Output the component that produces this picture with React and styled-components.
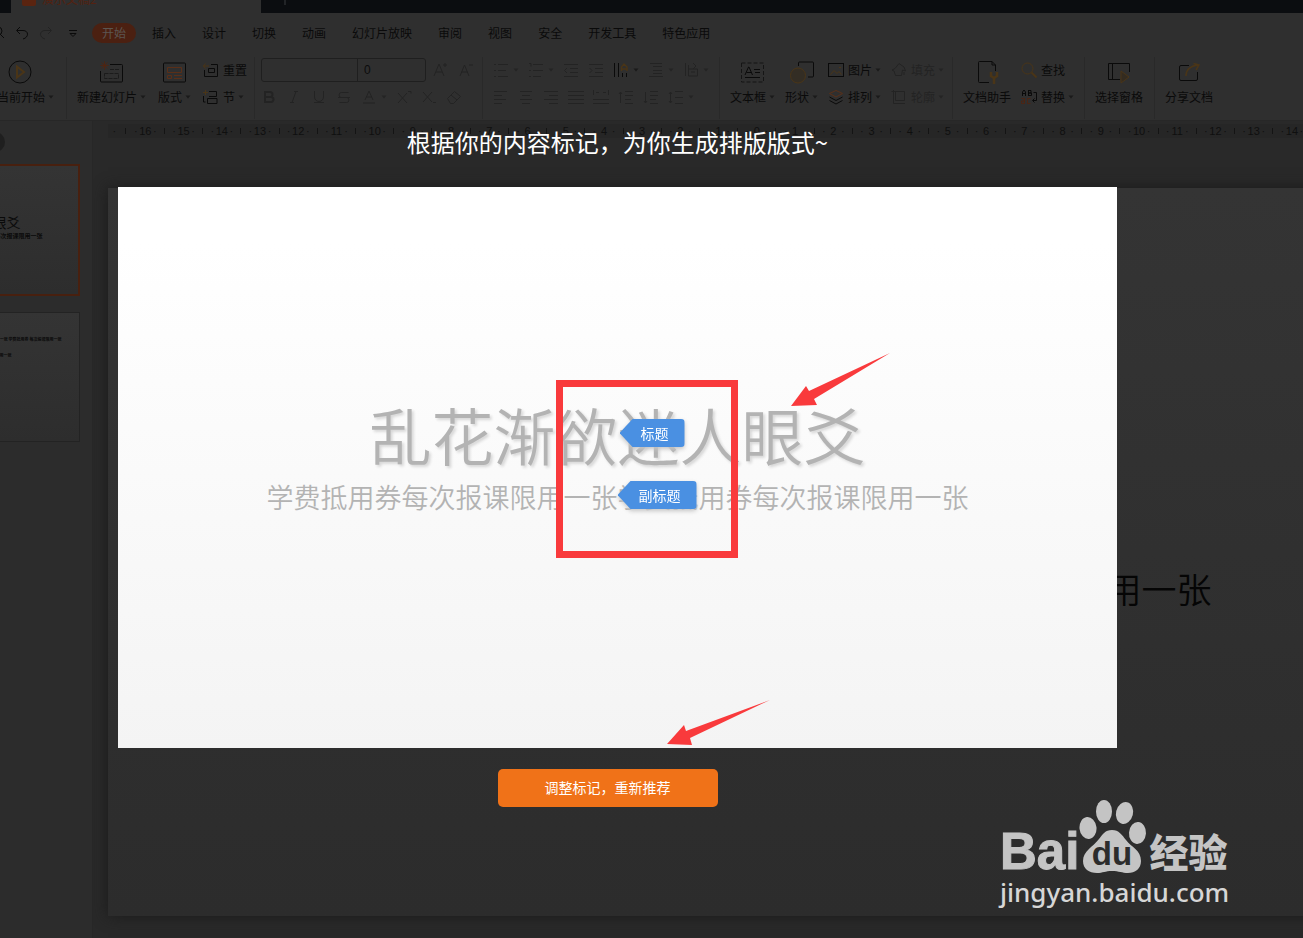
import React from "react";
import styled, { createGlobalStyle, css } from "styled-components";

const ink = "#0a0a0a";
const faint = "#232323";
const gold = "#4a3517";
const rust = "#4d2513";

const GlobalStyle = createGlobalStyle`
  *, *::before, *::after { box-sizing: border-box; }
  body {
    margin: 0;
    background: #292929;
    font-family: "Noto Sans CJK SC", "Liberation Sans", sans-serif;
  }
  button, input { font: inherit; color: inherit; }
`;

const Shell = styled.div`
  position: relative;
  display: flex;
  flex-direction: column;
  min-height: 100vh;
  overflow: hidden;
  color: ${ink};
  font-size: 12px;
  line-height: 20px;
`;

/* ---------- window tabs ---------- */
const TabStrip = styled.div`
  display: flex;
  align-items: flex-end;
  height: 13px;
  padding-left: 11px;
  overflow: hidden;
  background: #0b0d10;
`;

const DocTab = styled.div`
  display: flex;
  align-items: center;
  flex: 0 0 250px;
  gap: 6px;
  height: 28px;
  padding: 0 12px 0 11px;
  background: #2f2f2f;
  color: #532211;
`;

const DocBadge = styled.span`
  width: 14px;
  height: 14px;
  border-radius: 2px;
  background: #5a2410;
`;

const DocName = styled.span`
  flex: 1;
`;

const PlainButton = styled.button`
  display: inline-flex;
  align-items: center;
  padding: 0;
  border: 0;
  background: none;
  color: inherit;
  line-height: 20px;
  white-space: nowrap;
  cursor: pointer;
`;

const NewTab = styled(PlainButton)`
  height: 28px;
  padding-left: 18px;
  color: #3a3c3e;
`;

/* ---------- menu ---------- */
const MenuBar = styled.div`
  display: flex;
  align-items: center;
  height: 39px;
  background: #2f2f2f;
`;

const QuickActions = styled.div`
  display: flex;
  align-items: center;
  flex: 0 0 89px;
  gap: 8px;
  margin-left: -10px;
`;

const Menu = styled.nav`
  display: flex;
  align-items: center;
  margin-left: 10px;
`;

const MenuItem = styled(PlainButton)`
  height: 20px;
  padding: 0 13px;
  ${(p) =>
    p.$active &&
    css`
      margin: 0 3px;
      padding: 0 10px;
      border-radius: 10px;
      background: #4b2011;
      color: #5c5651;
    `}
`;

/* ---------- ribbon ---------- */
const Ribbon = styled.div`
  display: flex;
  height: 69px;
  padding-top: 5px;
  border-bottom: 1px solid #272727;
  background: #2f2f2f;
`;

const Group = styled.div`
  display: flex;
  flex: 0 0 ${(p) => p.$width}px;
  gap: ${(p) => p.$gap || 10}px;
  height: 62px;
  padding-left: ${(p) => p.$pad || 10}px;
  border-right: ${(p) => (p.$last ? "0" : "1px solid #292929")};
`;

const BigTool = styled(PlainButton)`
  flex-direction: column;
  flex: none;
  height: 52px;
  margin-left: ${(p) => (p.$cut ? "-16px" : "0")};
`;

const BigIcon = styled.span`
  display: flex;
  align-items: center;
  height: 30px;
`;

const Label = styled.span`
  display: inline-flex;
  align-items: center;
  gap: 3px;
`;

const Stack = styled.div`
  display: flex;
  flex-direction: column;
  flex: none;
  gap: 1px;
`;

const Line = styled.div`
  display: flex;
  align-items: center;
  gap: ${(p) => (p.$tight ? "0" : "9px")};
  height: 26px;
`;

const SmallTool = styled(PlainButton)`
  gap: 4px;
  height: 26px;
  color: ${(p) => (p.$off ? faint : ink)};
`;

const Field = styled.input`
  width: ${(p) => p.$width}px;
  height: 24px;
  padding: 0 6px;
  border: 1px solid #1f1f1f;
  border-radius: ${(p) => (p.$end ? "0 3px 3px 0" : "3px 0 0 3px")};
  margin-left: ${(p) => (p.$end ? "-1px" : "0")};
  background: none;
  color: #0c0c0c;
  font-family: "Liberation Sans", sans-serif;
  outline: 0;
`;

const SizeTools = styled.div`
  display: flex;
  gap: 9px;
  margin-left: 6px;
`;

/* ---------- workspace ---------- */
const Workspace = styled.div`
  display: flex;
  flex: 1;
`;

const Thumbs = styled.aside`
  display: flex;
  flex-direction: column;
  align-items: flex-end;
  flex: 0 0 93px;
  gap: 16px;
  padding: 9px 12px 0 0;
  overflow: hidden;
  border-right: 1px solid #272727;
  background: #2c2c2c;
`;

const PanelToggle = styled.button`
  align-self: flex-start;
  width: 20px;
  height: 20px;
  margin: 2px 0 -4px -15px;
  padding: 0;
  border: 0;
  border-radius: 50%;
  background: #1f1f1f;
`;

const Thumb = styled.div`
  display: flex;
  flex-direction: column;
  align-items: center;
  flex: none;
  width: 231px;
  height: ${(p) => (p.$current ? 132 : 130)}px;
  padding-top: ${(p) => (p.$current ? 47 : 22)}px;
  border: ${(p) => (p.$current ? "2px solid #48200f" : "1px solid #232323")};
  background: linear-gradient(#343434, #2d2d2d);
  white-space: nowrap;
`;

const ThumbTitle = styled.span`
  font-size: 14px;
  line-height: 18px;
`;

const ThumbText = styled.span`
  font-size: 6px;
  line-height: 10px;
  font-weight: 700;
`;

const ThumbNote = styled.span`
  width: 194px;
  margin-bottom: 8px;
  font-size: 4px;
  line-height: 8px;
  font-weight: 700;
  text-align: ${(p) => (p.$short ? "left" : "right")};
  padding-left: ${(p) => (p.$short ? "132px" : "0")};
`;

const Main = styled.main`
  flex: 1;
  min-width: 0;
  padding-left: 15px;
  overflow: hidden;
  background: #292929;
`;

const Ruler = styled.div`
  display: flex;
  height: 14px;
  margin: 3px -13px 50px 0;
  background: #262626;
  color: #0f0f0f;
  font-family: "Liberation Sans", sans-serif;
  font-size: 11px;
  line-height: 14px;
`;

const RulerLead = styled.div`
  display: flex;
  flex: 0 0 23px;
  justify-content: space-around;
`;

const RulerUnit = styled.div`
  display: grid;
  grid-template-columns: repeat(4, minmax(0, 1fr));
  flex: 1 1 0;
  min-width: 0;
  justify-items: center;
`;

const RulerTick = styled.span`
  width: 1px;
  height: 6px;
  margin-top: 4px;
  background: #141414;
`;

const RulerNumber = styled.span`
  display: flex;
  justify-content: center;
  width: 0;
`;

const EditorSlide = styled.section`
  display: flex;
  flex-direction: column;
  align-items: center;
  width: 1297px;
  min-width: 108%;
  height: 728px;
  padding-top: 266px;
  background: linear-gradient(#343434, #2c2c2c);
  box-shadow: 0 0 14px #1b1b1b;
  color: #050505;
  white-space: nowrap;
`;

const EditorTitle = styled.div`
  font-size: 80px;
  line-height: 116px;
  font-weight: 350;
`;

const EditorSubtitle = styled.div`
  font-size: 35px;
  line-height: 36px;
  font-weight: 350;
`;

/* ---------- recommendation overlay ---------- */
const Overlay = styled.div`
  position: absolute;
  inset: 0;
  display: flex;
  flex-direction: column;
  align-items: center;
  padding: 125px 186px 0 118px;
`;

const Headline = styled.h1`
  margin: 0 0 28px;
  color: #fff;
  font-size: 24px;
  line-height: 34px;
  font-weight: 400;
`;

const Preview = styled.section`
  position: relative;
  display: flex;
  flex-direction: column;
  align-items: center;
  width: 100%;
  min-height: 561px;
  padding-top: 204px;
  background: linear-gradient(#ffffff 10%, #f4f4f4);
  color: #b3b3b3;
  white-space: nowrap;
`;

const PreviewTitle = styled.h2`
  margin: 0;
  font-size: 62px;
  line-height: 86px;
  font-weight: 350;
  text-shadow: 2px 2px 3px #d6d6d6;
`;

const PreviewSubtitle = styled.p`
  margin: 0;
  font-size: 27px;
  line-height: 40px;
  font-weight: 350;
`;

const Mark = styled.button`
  position: absolute;
  left: calc(50% + 2px);
  top: ${(p) => p.$top}px;
  height: 28px;
  padding: 0 16px 0 21px;
  border: 0;
  background: none;
  color: #fff;
  font-size: 14px;
  line-height: 28px;
  filter: drop-shadow(0 2px 2px #c4c4c4);
  margin-left: ${(p) => (p.$wide ? "-2px" : "0")};

  &::before {
    content: "";
    position: absolute;
    inset: 0;
    z-index: -1;
    border-radius: 4px;
    background: #4a90e2;
    clip-path: polygon(0 50%, 13px 0, 100% 0, 100% 100%, 13px 100%);
  }
`;

const Highlight = styled.div`
  position: absolute;
  left: calc(50% - 62px);
  top: 193px;
  width: 182px;
  height: 178px;
  border: 7px solid #f93a3c;
`;

const Pointer = styled.svg`
  position: absolute;
  left: calc(50% + ${(p) => p.$x}px);
  top: ${(p) => p.$y}px;
`;

const Confirm = styled.button`
  width: 220px;
  height: 38px;
  margin: 21px 20px 0 0;
  padding: 0 0 2px;
  border: 0;
  border-radius: 5px;
  background: #f07218;
  color: #fff;
  font-size: 14px;
  cursor: pointer;
`;

/* ---------- watermark ---------- */
const Watermark = styled.div`
  position: absolute;
  right: 70px;
  bottom: 28px;
  width: 233px;
  color: #c4c4c4;
`;

const Brand = styled.div`
  display: flex;
  align-items: flex-end;
  height: 75px;
`;

const BrandLatin = styled.span`
  font-family: "Liberation Sans", sans-serif;
  font-size: 51px;
  line-height: 54px;
  height: 49px;
  font-weight: 700;
  -webkit-text-stroke: 1px #c4c4c4;
`;

const BrandChinese = styled.span`
  font-size: 39px;
  line-height: 40px;
  height: 44px;
  font-weight: 900;
`;

const Site = styled.a`
  display: block;
  color: #d6d6d6;
  font-family: "Noto Sans", sans-serif;
  font-size: 26px;
  line-height: 36px;
  font-weight: 500;
  text-decoration: none;
`;

/* ---------- drawings ---------- */
const Caret = ({ off }) => (
  <svg width="6" height="4" viewBox="0 0 6 4" aria-hidden="true">
    <path d="M0.5 0.5h5L3 3.5z" fill={off ? "#242424" : "#1a1a1a"} />
  </svg>
);

const Icon = ({ size = 16, color = ink, children }) => (
  <svg
    width={size}
    height={size}
    viewBox={`0 0 ${size} ${size}`}
    fill="none"
    stroke={color}
    strokeWidth="1"
    aria-hidden="true"
  >
    {children}
  </svg>
);

const big = {
  play: (
    <Icon size={24}>
      <circle cx="12" cy="12" r="11" />
      <path d="M9 6.5v11l7-5.500z" stroke={gold} strokeWidth="2" />
    </Icon>
  ),
  newSlide: (
    <Icon size={24}>
      <path d="M10 4.500h11.500a1 1 0 0 1 1 1v15.500a1 1 0 0 1-1 1h-20a1 1 0 0 1-1-1V11" />
      <path d="M10 9.500h9M4.500 13.500h14v5h-14z" stroke="#1b1b1b" strokeDasharray="4 1" />
      <path d="M4.500 1.500v8M0.500 5.500h8M1.500 2.500l6 6M7.500 2.500l-6 6" stroke={rust} />
    </Icon>
  ),
  layout: (
    <Icon size={24}>
      <rect x="0.500" y="3" width="22" height="19" rx="1" />
      <path d="M4.500 7.500h14v5h-14zM4.500 15.500h4v3h-4zM11 15.500h8M11 18.500h8" stroke="#5a2f18" />
    </Icon>
  ),
  textBox: (
    <Icon size={24}>
      <rect x="0.500" y="3" width="22" height="19" strokeDasharray="4 2" stroke="#151515" />
      <path d="M4 15l3.500-8h.5l3.500 8M5.500 12.500h5M13 9.500h6M14 12.500h5M4 17.500h15" />
    </Icon>
  ),
  shape: (
    <Icon size={24}>
      <path d="M8.500 6V3a1 1 0 0 1 1-1h13a1 1 0 0 1 1 1v13a1 1 0 0 1-1 1H18" />
      <circle cx="8" cy="15.500" r="7.500" stroke={gold} fill="#332d24" />
    </Icon>
  ),
  doc: (
    <Icon size={24}>
      <path d="M14 22.500H4.500a1 1 0 0 1-1-1v-19a1 1 0 0 1 1-1H17l3.500 3.500V11M17 1.500V5h3.500" />
      <path d="M16 12v4l3 2 3-2v-4M19 17v7" stroke={gold} strokeWidth="2.500" />
    </Icon>
  ),
  pane: (
    <Icon size={24}>
      <path d="M13 19.500H1.500v-16h21V12M5.500 4v15" />
      <path d="M14 11v12l8-6z" stroke={gold} fill="#332b20" />
    </Icon>
  ),
  share: (
    <Icon size={24}>
      <path d="M12 5.500H4a1.500 1.500 0 0 0-1.500 1.500v12A1.500 1.500 0 0 0 4 20.500h15a1.500 1.500 0 0 0 1.500-1.500V12" />
      <path d="M9 16c0-6 4-10 12-11M16.500 3.500L22 5l-3 5" stroke={gold} strokeWidth="1.500" />
    </Icon>
  ),
};

const small = {
  reset: (
    <Icon>
      <path d="M8 2.500h6.500v12H1.500V8M5.500 6.500h6v4h-6z" />
      <path d="M0 4h6M2.500 1.500L0.500 4l2 2.500" stroke={gold} />
    </Icon>
  ),
  section: (
    <Icon>
      <path d="M6 2.500h7.500v5H6M4.500 9.500h9.500v5H4.500zM0.500 7v6h2" />
      <path d="M2.500 1v5M0 3.500h5" stroke={gold} />
    </Icon>
  ),
  picture: (
    <Icon>
      <rect x="0.500" y="1.500" width="15" height="13" />
      <path d="M2.500 12.500l3.500-4 3 3 2-2 2.500 3M11 5.500h2" stroke={gold} />
    </Icon>
  ),
  arrange: (
    <Icon>
      <path d="M1.500 4.500L8 1.500l6.500 3L8 8z" stroke="#5a2f18" />
      <path d="M1.500 8L8 11.500 14.500 8M1.500 11.500L8 15l6.500-3.500" />
    </Icon>
  ),
  fill: (
    <Icon color={faint}>
      <path d="M4 6.500L8 1.500l5 3.500 1.500 4-3-1-1 5.500H4.500L3 9 1 8zM13 10v3" />
    </Icon>
  ),
  outline: (
    <Icon color={faint}>
      <path d="M2.500 1v13.500H14M4.500 2.500h9v9h-9zM0.500 2.500h4" />
    </Icon>
  ),
  find: (
    <Icon>
      <circle cx="6.500" cy="6.500" r="5.500" stroke={gold} />
      <path d="M10.500 10.500l5 5" stroke={gold} strokeWidth="2" />
    </Icon>
  ),
  replace: (
    <Icon>
      <path d="M1.500 7V3L3 1l1.500 2v4M1.500 4.500h3M7.500 1v6M7.500 1.500h2.500v2.500H7.500M7.500 4h3v2.500h-3M12.500 3.500h3v8H12M13.500 9.500l-2 2 2 2" />
      <path d="M0.500 9.500h3v5h-3v-2.500h3M9.500 9.500H6.500v5h3" stroke={rust} />
    </Icon>
  ),
};

const glyphPaths = {
  growFont: "M2 14L7 2l5 12M4 10h6M13 1v4M11 3h4",
  shrinkFont: "M3 14L7.500 3 12 14M4.500 10h6M12 3h4",
  bold: "M4 3h5a2.500 2.500 0 0 1 0 5H4zM4 8h6a2.500 2.500 0 0 1 0 5H4z",
  italic: "M8 2.500h4M4 13.500h4M10 2.500l-4 11",
  underline: "M3.500 2v6a4 4 0 0 0 9 0V2M3 13.500h10",
  strike: "M12.500 3.500h-7a2.500 2.500 0 0 0 0 5h5a2.500 2.500 0 0 1 0 5h-7M2 8.500h12",
  fontColor: "M4 11l4-9 4 9M5.500 8h5M2 14h12",
  superscript: "M2 4l9 10M11 4l-9 10M12 2.500h3v2",
  subscript: "M2 3l9 10M11 3l-9 10M12 13.500h3",
  eraser: "M1.500 9.500l7-7 6 5-7 7h-3zM5 6l6 5",
  bullets: "M1 2.500h2M5 2.500h10M1 8.500h2M5 8.500h8M1 14.500h2M5 14.500h10",
  numbers: "M1 1.500h2v3M5 2.500h10M1 8.500h2M5 8.500h10M1 14.500h2M5 14.500h8",
  outdent: "M1 2.500h14M7 6.500h8M7 10.500h8M1 14.500h14M4 6L1.500 8.500 4 11",
  indent: "M1 2.500h14M7 6.500h8M7 10.500h8M1 14.500h14M1.500 6L4 8.500 1.500 11",
  textBoxAlign: "M2 1.500h12M5 4.500h9M5 8.500h9M5 11.500h9M1 14.500h14",
  convert: "M2.500 1v13M5.500 3v11h9V7h-9M10 1l3 3-3 3M8 10h4",
  left: "M1 2.500h13M1 6.500h8M1 10.500h12M1 14.500h8",
  center: "M2 2.500h12M4 6.500h8M2 10.500h12M4 14.500h8",
  right: "M1 2.500h14M6 6.500h9M1 10.500h14M6 14.500h9",
  justify: "M0 2.500h16M0 6.500h16M0 10.500h16M0 14.500h16",
  spread: "M0.500 1v5M15.500 1v5M3 3.500h3M10 3.500h3M0 10.500h16M0 14.500h16",
  before: "M2.500 3v11M1 5l1.500-2L4 5M7 2.500h8M7 6.500h8M7 10.500h6M7 14.500h8",
  after: "M2.500 3v11M1 12l1.500 2L4 12M7 2.500h8M7 6.500h8M7 10.500h6M7 14.500h8",
  spacing: "M2.500 3v11M1 5l1.500-2L4 5M1 12l1.500 2L4 12M7 2.500h8M7 8.500h8M7 14.500h8",
};

const Glyph = ({ name, label, caret }) => (
  <SmallTool $off aria-label={label}>
    <Icon color={faint}>
      <path d={glyphPaths[name]} strokeWidth={name === "bold" ? 2 : 1} />
    </Icon>
    {caret && <Caret off />}
  </SmallTool>
);

const Big = ({ icon, label, caret, cut }) => (
  <BigTool $cut={cut}>
    <BigIcon>{big[icon]}</BigIcon>
    <Label>
      {label}
      {caret && <Caret />}
    </Label>
  </BigTool>
);

const Small = ({ icon, label, caret, off }) => (
  <SmallTool $off={off}>
    {small[icon]}
    <Label>
      {label}
      {caret && <Caret off={off} />}
    </Label>
  </SmallTool>
);

const menuItems = [
  "开始", "插入", "设计", "切换", "动画", "幻灯片放映",
  "审阅", "视图", "安全", "开发工具", "特色应用",
];
const rulerNumbers = Array.from({ length: 31 }, (_, i) => Math.abs(i - 16));
const title = "乱花渐欲迷人眼爻";
const subtitle = "学费抵用券每次报课限用一张学费抵用券每次报课限用一张";

const Paw = () => (
  <svg width="70" height="75" viewBox="0 0 70 75" aria-hidden="true">
    <g fill="#c4c4c4">
      <ellipse cx="9" cy="29" rx="8.500" ry="11" transform="rotate(-6 9 29)" />
      <ellipse cx="25" cy="12.500" rx="8" ry="11.500" />
      <ellipse cx="45.500" cy="14" rx="8.500" ry="11" transform="rotate(14 45.500 14)" />
      <ellipse cx="58.500" cy="34" rx="8.500" ry="11" transform="rotate(4 58.500 34)" />
      <path d="M33 31c7 0 10 5 14 10 5 7 15 10 15 21 0 8-6 12-13 12-6 0-9-2-16-2s-9 2-15 2C10 74 4 70 4 62c0-10 10-14 16-22 4-5 6-9 13-9z" />
    </g>
    <text
      x="33"
      y="66"
      textAnchor="middle"
      fill="#2c2c2c"
      fontFamily="Liberation Sans, sans-serif"
      fontWeight="700"
      fontSize="33"
    >
      du
    </text>
  </svg>
);

export default function App() {
  return (
    <Shell>
      <GlobalStyle />
      <TabStrip>
        <DocTab>
          <DocBadge />
          <DocName>演示文稿2</DocName>
          <span>•</span>
        </DocTab>
        <NewTab aria-label="新建">
          <Icon size={12} color="#3a3c3e">
            <path d="M6 0v12M0 6h12" />
          </Icon>
        </NewTab>
      </TabStrip>

      <MenuBar>
        <QuickActions>
          <PlainButton aria-label="预览">
            <Icon><circle cx="8" cy="6" r="4" /><path d="M10 9l4 4M4 13h5" /></Icon>
          </PlainButton>
          <PlainButton aria-label="撤销">
            <Icon><path d="M6 2L2.500 5.500 6 9M3 5.500h6c6 0 6 7 0 8.500" /></Icon>
          </PlainButton>
          <PlainButton aria-label="恢复">
            <Icon color={faint}><path d="M10 2l3.500 3.500L10 9M13 5.500H7c-6 0-6 7 0 8.500" /></Icon>
          </PlainButton>
          <PlainButton aria-label="自定义">
            <Icon><path d="M7 5.500h8M8 8.500h6l-3 3z" /></Icon>
          </PlainButton>
        </QuickActions>
        <Menu>
          {menuItems.map((item, i) => (
            <MenuItem key={item} $active={i === 0}>{item}</MenuItem>
          ))}
        </Menu>
      </MenuBar>

      <Ribbon>
        <Group $width={67} $pad={1}>
          <Big icon="play" label="从当前开始" caret cut />
        </Group>
        <Group $width={188} $gap={12}>
          <Big icon="newSlide" label="新建幻灯片" caret />
          <Big icon="layout" label="版式" caret />
          <Stack>
            <Small icon="reset" label="重置" />
            <Small icon="section" label="节" caret />
          </Stack>
        </Group>
        <Group $width={228} $pad={6}>
          <Stack>
            <Line $tight>
              <Field $width={97} aria-label="字体" defaultValue="" />
              <Field $width={69} $end aria-label="字号" defaultValue="0" />
              <SizeTools>
                <Glyph name="growFont" label="增大字号" />
                <Glyph name="shrinkFont" label="减小字号" />
              </SizeTools>
            </Line>
            <Line>
              <Glyph name="bold" label="加粗" />
              <Glyph name="italic" label="倾斜" />
              <Glyph name="underline" label="下划线" />
              <Glyph name="strike" label="删除线" />
              <Glyph name="fontColor" label="字体颜色" caret />
              <Glyph name="superscript" label="上标" />
              <Glyph name="subscript" label="下标" />
              <Glyph name="eraser" label="清除格式" />
            </Line>
          </Stack>
        </Group>
        <Group $width={237}>
          <Stack>
            <Line>
              <Glyph name="bullets" label="项目符号" caret />
              <Glyph name="numbers" label="编号" caret />
              <Glyph name="outdent" label="减少缩进" />
              <Glyph name="indent" label="增加缩进" />
              <SmallTool aria-label="文字方向">
                <Icon>
                  <path d="M1.500 1v14M5.500 1v14M9.500 11v4M13.500 11v4" />
                  <path d="M8.500 9V5L11 2l3 3v4M8.500 7h5" stroke={gold} strokeWidth="1.500" />
                </Icon>
                <Caret />
              </SmallTool>
              <Glyph name="textBoxAlign" label="对齐文本" caret />
              <Glyph name="convert" label="转换" caret />
            </Line>
            <Line>
              <Glyph name="left" label="左对齐" />
              <Glyph name="center" label="居中" />
              <Glyph name="right" label="右对齐" />
              <Glyph name="justify" label="两端对齐" />
              <Glyph name="spread" label="分散对齐" />
              <Glyph name="before" label="段前间距" />
              <Glyph name="after" label="段后间距" />
              <Glyph name="spacing" label="行距" caret />
            </Line>
          </Stack>
        </Group>
        <Group $width={233}>
          <Big icon="textBox" label="文本框" caret />
          <Big icon="shape" label="形状" caret />
          <Stack>
            <Small icon="picture" label="图片" caret />
            <Small icon="arrange" label="排列" caret />
          </Stack>
          <Stack>
            <Small icon="fill" label="填充" caret off />
            <Small icon="outline" label="轮廓" caret off />
          </Stack>
        </Group>
        <Group $width={132}>
          <Big icon="doc" label="文档助手" />
          <Stack>
            <Small icon="find" label="查找" />
            <Small icon="replace" label="替换" caret />
          </Stack>
        </Group>
        <Group $width={70}>
          <Big icon="pane" label="选择窗格" />
        </Group>
        <Group $width={70} $last>
          <Big icon="share" label="分享文档" />
        </Group>
      </Ribbon>

      <Workspace>
        <Thumbs>
          <PanelToggle aria-label="大纲" />
          <Thumb $current>
            <ThumbTitle>{title}</ThumbTitle>
            <ThumbText>{subtitle}</ThumbText>
          </Thumb>
          <Thumb>
            <ThumbNote>学费抵用券每次报课限用一张 学费抵用券 每次报课限用一张</ThumbNote>
            <ThumbNote $short>用一张</ThumbNote>
          </Thumb>
        </Thumbs>
        <Main>
          <Ruler>
            <RulerLead>
              <span>·</span>
              <RulerTick />
            </RulerLead>
            {rulerNumbers.map((n, i) => (
              <RulerUnit key={i}>
                <span>·</span>
                <RulerNumber>{n}</RulerNumber>
                <span>·</span>
                <RulerTick />
              </RulerUnit>
            ))}
          </Ruler>
          <EditorSlide>
            <EditorTitle>{title}</EditorTitle>
            <EditorSubtitle>{subtitle}</EditorSubtitle>
          </EditorSlide>
        </Main>
      </Workspace>

      <Overlay>
        <Headline>根据你的内容标记，为你生成排版版式~</Headline>
        <Preview>
          <PreviewTitle>{title}</PreviewTitle>
          <PreviewSubtitle>{subtitle}</PreviewSubtitle>
          <Mark $top={232}>标题</Mark>
          <Mark $top={294} $wide>副标题</Mark>
          <Highlight />
          <Pointer $x={173} $y={166} width="100" height="54" viewBox="0 0 100 54" fill="#f93a3c" aria-hidden="true">
            <path d="M0 53L15 33l3 5L99 0 23 46l3 6z" />
          </Pointer>
          <Pointer $x={49} $y={513} width="104" height="46" viewBox="0 0 104 46" fill="#f93a3c" aria-hidden="true">
            <path d="M0 44L17 25l2 6L103 0 23 38l2 7z" />
          </Pointer>
        </Preview>
        <Confirm>调整标记，重新推荐</Confirm>
      </Overlay>

      <Watermark>
        <Brand>
          <BrandLatin>Bai</BrandLatin>
          <Paw />
          <BrandChinese>经验</BrandChinese>
        </Brand>
        <Site href="#">jingyan.baidu.com</Site>
      </Watermark>
    </Shell>
  );
}
